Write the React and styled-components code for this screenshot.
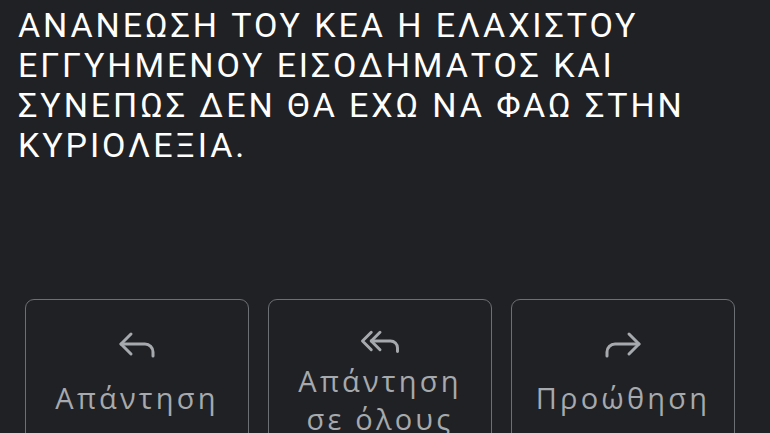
import React from 'react'
import styled, { createGlobalStyle } from 'styled-components'
import { Reply, ReplyAll, Forward } from 'lucide-react'

const GlobalStyle = createGlobalStyle`
  html, body {
    margin: 0;
    padding: 0;
    background: #202124;
  }
  body {
    font-family: Roboto, "Noto Sans", sans-serif;
  }
`

const Page = styled.div`
  width: 770px;
  height: 433px;
  overflow: hidden;
  background: #202124;
  display: flex;
  flex-direction: column;
`

const Body = styled.p`
  flex: none;
  margin: 0;
  padding: 5px 24px 0 18px;
  font-family: Roboto, "Noto Sans", sans-serif;
  font-size: 34px;
  line-height: 40px;
  letter-spacing: 2.9px;
  color: #ffffff;
  height: 299px;
  box-sizing: border-box;
`

const Actions = styled.div`
  flex: none;
  display: flex;
  gap: 19px;
  padding-left: 25px;
`

const ActionButton = styled.button`
  width: 224px;
  height: 156px;
  flex: none;
  box-sizing: border-box;
  background: transparent;
  border: 1px solid #6c6f73;
  border-radius: 9px;
  padding: 20px 2px 26px;
  display: flex;
  flex-direction: column;
  align-items: center;
  color: #a6a9ad;
  cursor: pointer;
`

const IconBox = styled.span`
  display: flex;
  width: 48px;
  height: 48px;
  align-items: center;
  justify-content: center;
  color: #a6a9ad;
`

const Label = styled.span`
  flex: 1;
  display: flex;
  align-items: center;
  justify-content: center;
  text-align: center;
  font-family: "Open Sans", "Noto Sans", sans-serif;
  font-size: 29px;
  line-height: 38px;
  letter-spacing: 3.2px;
  color: #a6a9ad;
`

const actions = [
  { icon: Reply, label: 'Απάντηση', size: 48 },
  { icon: ReplyAll, label: <>Απάντηση<br />σε όλους</>, size: 42 },
  { icon: Forward, label: 'Προώθηση', size: 48 },
]

const App = () => {
  return (
    <>
      <GlobalStyle />
      <Page>
        <Body>
          ΑΝΑΝΕΩΣΗ ΤΟΥ ΚΕΑ Η ΕΛΑΧΙΣΤΟΥ ΕΓΓΥΗΜΕΝΟΥ ΕΙΣΟΔΗΜΑΤΟΣ ΚΑΙ ΣΥΝΕΠΩΣ ΔΕΝ ΘΑ
          ΕΧΩ ΝΑ ΦΑΩ ΣΤΗΝ ΚΥΡΙΟΛΕΞΙΑ.
        </Body>
        <Actions>
          {actions.map((a, i) => {
            const Icon = a.icon
            return (
              <ActionButton key={i}>
                <IconBox>
                  <Icon size={a.size} strokeWidth={a.size === 48 ? 1.5 : 1.7} />
                </IconBox>
                <Label>{a.label}</Label>
              </ActionButton>
            )
          })}
        </Actions>
      </Page>
    </>
  )
}

export default App
